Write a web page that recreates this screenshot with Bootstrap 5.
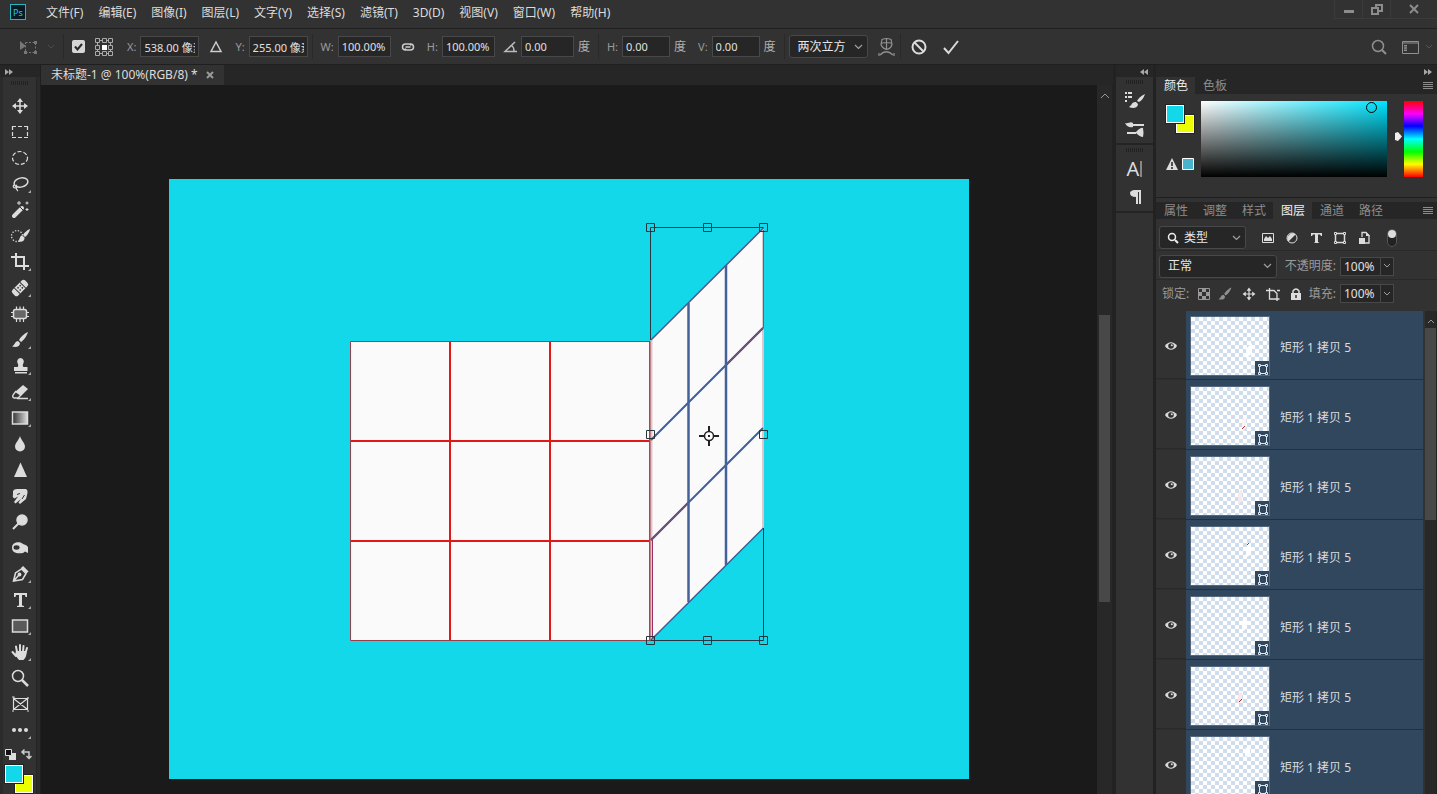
<!DOCTYPE html>
<html lang="zh-CN">
<head>
<meta charset="utf-8">
<meta name="viewport" content="width=device-width, initial-scale=1">
<title>未标题-1</title>
<link href="https://cdn.jsdelivr.net/npm/bootstrap@5.3.0/dist/css/bootstrap.min.css" rel="stylesheet">
<style>
:root{--bar:#323232;--deep:#262626;--line:#1f1f1f;--ink:#dcdcdc;--dim:#9a9a9a}
body{background:var(--bar);color:var(--ink);font:12px/16px "Noto Sans","Noto Sans CJK SC",sans-serif}
button,input,select{font:inherit;color:inherit}
button{background:none;border:0;padding:0}
a{color:inherit;text-decoration:none}
svg{display:block;flex:none}
.i{width:20px;height:20px;fill:none;stroke:currentColor;stroke-width:1.5}
.menubar{height:29px;border-bottom:1px solid var(--line);padding-left:10px}
.menubar nav{gap:15px;margin-left:20px;padding-bottom:3px}
.winbtns{height:19px}
.winbtns button{width:28px;border:1px solid #3b3b3b;border-top:0;border-right:0;color:#8c8c8c;display:grid;place-items:center}
.winbtns button:last-child{width:47px}
.optbar{height:36px;border-bottom:1px solid var(--line);font-size:11px;padding:0 4px 0 19px}
.vsep{width:1px;height:25px;background:#292929}
.lab{color:var(--dim);white-space:nowrap}
.optbar .unit{font-size:12px;color:#b0b0b0}
.field{background:#262626;border:1px solid #484848;height:21px;padding:0 3px;border-radius:0;color:#e0e0e0;min-width:0}
.w59{width:59px}.w53{width:53px}.w48{width:48px}
.pick{appearance:none;background:#262626 url("data:image/svg+xml,%3Csvg xmlns='http://www.w3.org/2000/svg' width='9' height='6'%3E%3Cpath d='M1 1l3.500 3.500L8 1' fill='none' stroke='%23a0a0a0' stroke-width='1.200'/%3E%3C/svg%3E") no-repeat right 4px center;border:1px solid #484848;border-radius:3px;height:23px;padding:0 8px;font-size:12px;color:#e8e8e8}
.pick-interp{width:79px}.pick-kind{width:87px}.pick-blend{width:118px}
.tick{appearance:none;width:13px;height:13px;border-radius:2px;margin:0;background:#d6d6d6 url("data:image/svg+xml,%3Csvg xmlns='http://www.w3.org/2000/svg' width='13' height='13'%3E%3Cpath d='M3 6.500l2.500 3L10 4' fill='none' stroke='%23282828' stroke-width='2'/%3E%3C/svg%3E")}
.strip{height:12px;background:var(--deep);color:#a8a8a8;flex:none}
.toolbox{width:41px;border-right:1px solid var(--line);background:#2b2b2b;flex:none}
.tools{background:var(--bar);border-left:1px solid #2a2a2a;border-right:1px solid #242424;margin:0 3px 0 2px}
.grip{height:16px;display:grid;place-items:center;flex:none}
.grip::before{content:"";width:18px;height:4px;background:repeating-linear-gradient(90deg,#222 0 1px,transparent 1px 2px)}
.tool{position:relative;width:100%;height:26px;display:grid;place-items:center;flex:none}
.more::after{content:"";position:absolute;right:5px;bottom:4px;border:solid transparent;border-width:3px 0 0 3px;border-bottom:3px solid #aaa;border-top:0}
.swap{height:22px;padding:0 4px 0 2px}
.pair{position:relative;width:30px;height:29px}
.tools .pair{margin-left:2px}
.pair i{position:absolute;width:18px;height:18px;border:1px solid #fff;outline:1px solid #222}
.pair .fg{left:0;top:0;background:#13d8ea;z-index:1}
.pair .bg{left:10px;top:10px;background:#ebff00}
.doctabs{height:20px;background:var(--deep);flex:none}
.doctab{background:var(--bar);padding:0 10px;gap:8px}
.stage{background:#1a1a1a}
.stage svg{margin-top:94px}
.vbar{background:#282828;border-right:1px solid #222}
.vbar i{background:#484848}
.docbar{width:16px;padding:0 2px}
.docbar i{height:287px;margin-top:216px}
.layerbar{width:12px;margin-left:2px}
.layerbar i{height:192px}
.dock{width:43px;border-left:3px solid #222;background:var(--bar);border-right:3px solid #222}
.dock section{border-bottom:2px solid #242424}
.dock .grip{height:10px}
.dock .tool{height:28px}
.glyph-a{font:20px/20px "Noto Sans",sans-serif}
.panels{width:281px}
.tabrow{background:var(--deep);height:17px;flex:none}
.tabrow button{padding:0 7px 0 8px;color:#8c8c8c}
.tabrow .on{background:var(--bar);color:#f0f0f0}
.colors{height:104px;padding:7px 14px 0 10px;border-bottom:1px solid var(--line)}
.chips{width:35px}
.field2d{height:76px;background:linear-gradient(transparent,#000),linear-gradient(90deg,#fff,#00e5ff);position:relative}
.ring{position:absolute;right:10px;top:1px;width:11px;height:11px;border:1px solid #000;border-radius:50%}
.hue{width:19px;height:76px;background:linear-gradient(red,#f0f 17%,#00f 33%,#0ff 50%,#0f0 67%,#ff0 83%,red)}
.prow{border-bottom:1px solid #292929;padding-left:3px;height:29px}
.prow.kinds{height:32px;padding-top:6px}
.prow.blend{padding-top:2px}
.prow.locks{height:31px;padding:0 0 4px 6px;border:0}
.prow .i.sm{padding:2px}
.pct{width:40px;height:19px;font-size:12px;border-right:0}
.drop{width:14px;height:19px;border:1px solid #484848;background:#262626;display:grid;place-items:center;color:#a0a0a0;margin-right:43px}
.soft{color:#909090}
.layer{height:70px;border-bottom:1px solid #23303f}
.layer:first-child{height:69px}
.layer .eye{width:30px;background:var(--bar);border-bottom:1px solid #292929;padding-top:2px;display:grid;place-items:center}
.layer .body{background:#31475e;padding:6px 4px 0;gap:10px}
.layer:first-child .body{padding-top:5px}
.thumb{border:1px solid #54687d}
</style>
</head>
<body class="vh-100 overflow-hidden d-flex flex-column">
<svg width="0" height="0" class="position-absolute">
<defs>
<pattern id="chk" width="8" height="8" patternUnits="userSpaceOnUse"><path fill="#fff" d="M0 0h8v8H0z"/><path fill="#cfdded" d="M4 0h4v4H4zM0 4h4v4H0z"/></pattern>
<linearGradient id="gr"><stop stop-color="#333"/><stop offset="1" stop-color="#ddd"/></linearGradient>
<symbol id="move" viewBox="0 0 20 20"><path d="M10 4v12M4 10h12"/><path fill="currentColor" stroke="none" d="M10 2l3 4H7zM10 18l3-4H7zM2 10l4-3v6zM18 10l-4-3v6z"/></symbol>
<symbol id="frame" viewBox="0 0 20 20"><path d="M5.500 5.500h9v9h-9z"/><path fill="#323232" stroke-width="1" d="M4.500 4.500h2v2h-2zM13.500 4.500h2v2h-2zM4.500 13.500h2v2h-2zM13.500 13.500h2v2h-2z"/></symbol>
<symbol id="chev" viewBox="0 0 8 6"><path d="M1 1l3 3 3-3"/></symbol>
<symbol id="eye" viewBox="0 0 14 10"><path fill="currentColor" stroke="none" d="M1 5C4 0 10 0 13 5 10 10 4 10 1 5z"/><circle cx="7" cy="5" r="2.800" fill="#323232" stroke="none"/><circle cx="7.800" cy="4.300" r="1" fill="currentColor" stroke="none"/></symbol>
<symbol id="burger" viewBox="0 0 10 8"><path stroke-width="1" d="M0 .5h10M0 2.500h10M0 4.500h10M0 6.500h10"/></symbol>
<symbol id="brush" viewBox="0 0 20 20"><path fill="currentColor" stroke="none" d="M18 2c-4 1.500-8 6-9 8l2 2c2-1 6-6 7-10zM8 11c-3 0-3 4-6 5.500 4 1 8 .5 8-3.500z"/></symbol>
<symbol id="badge" viewBox="0 0 14 14"><path fill="#31475e" stroke="none" d="M0 0h14v14H0z"/><path stroke-width="1" d="M4.500 4.500h7v8h-7z"/><path fill="#31475e" stroke-width="1" d="M3.500 3.500h2v2h-2zM10.500 3.500h2v2h-2zM3.500 11.500h2v2h-2zM10.500 11.500h2v2h-2z"/></symbol>
</defs>
</svg>

<header class="menubar d-flex align-items-center flex-shrink-0">
  <svg class="mb-1" width="16" height="16" viewBox="0 0 16 16"><rect x=".5" y=".5" width="15" height="15" fill="#071b27" stroke="#27b5c2"/><text x="3" y="12" font-size="9" font-family="Noto Sans" fill="#2fc4dc">Ps</text></svg>
  <nav class="d-flex">
    <a href="#">文件(F)</a><a href="#">编辑(E)</a><a href="#">图像(I)</a><a href="#">图层(L)</a><a href="#">文字(Y)</a><a href="#">选择(S)</a><a href="#">滤镜(T)</a><a href="#">3D(D)</a><a href="#">视图(V)</a><a href="#">窗口(W)</a><a href="#">帮助(H)</a>
  </nav>
  <div class="winbtns d-flex ms-auto align-self-start">
    <button aria-label="最小化"><svg width="10" height="10"><path d="M0 6h10v3H0z" fill="currentColor"/></svg></button>
    <button aria-label="还原"><svg width="12" height="11" fill="none" stroke="currentColor" stroke-width="2"><path d="M5 3V1h6v6H8"/><path d="M1 4h6v6H1z"/></svg></button>
    <button aria-label="关闭"><svg width="10" height="10"><path d="M1 1l8 8M9 1L1 9" stroke="currentColor" stroke-width="2"/></svg></button>
  </div>
</header>

<form class="optbar d-flex align-items-center flex-shrink-0">
  <svg class="i" style="color:#777" viewBox="0 0 20 20"><path stroke-dasharray="2 1.500" stroke-width="1" d="M6.500 5.500h10v10h-10z"/><path fill="currentColor" stroke="none" d="M1 4l6 5-6 4zM15 4h3v3h-3zM15 14h3v3h-3zM5 14h3v3H5z"/></svg>
  <svg class="ms-2" width="8" height="6" fill="none" stroke="#4c4c4c"><use href="#chev"/></svg>
  <span class="vsep mx-2"></span>
  <input type="checkbox" class="tick" checked aria-label="切换参考点">
  <svg class="ms-2" width="22" height="20" viewBox="-1 0 22 20" fill="#323232" stroke="#aaa"><path fill="none" d="M3 3.500h14M3 16.500h14M3.500 3v14M16.500 3v14"/><path d="M1.500 1.500h4v4h-4zM8.500 1.500h4v4h-4zM14.500 1.500h4v4h-4zM1.500 8.500h4v4h-4zM14.500 8.500h4v4h-4zM1.500 14.500h4v4h-4zM8.500 14.500h4v4h-4zM14.500 14.500h4v4h-4z"/><path fill="#fff" stroke="none" d="M8 8h5v5H8z"/></svg>
  <label class="lab ms-2 me-1 ps-1" for="fx">X:</label><input id="fx" class="field w59" value="538.00 像素">
  <svg class="mx-2" width="20" height="20" viewBox="0 0 20 20" fill="none" stroke="#ccc" stroke-width="1.500"><path d="M9 5l5 9.500H4z"/></svg>
  <label class="lab me-1" for="fy">Y:</label><input id="fy" class="field w59" value="255.00 像素">
  <span class="vsep mx-1"></span>
  <label class="lab mx-1" for="fw">W:</label><input id="fw" class="field w53" value="100.00%">
  <svg class="mx-2" width="20" height="20" viewBox="0 0 20 20" fill="none" stroke="#ccc" stroke-width="1.500"><path d="M7 13H6.500a3 3 0 010-6H10a2.500 2.500 0 012 1.500M11 7h.5a3 3 0 010 6H8a2.500 2.500 0 01-2-1.500M6.500 10h5"/></svg>
  <label class="lab me-1" for="fh">H:</label><input id="fh" class="field w53" value="100.00%">
  <svg class="ms-2" width="18" height="20" viewBox="0 0 18 20" fill="none" stroke="#bbb" stroke-width="1.500"><path d="M12 5L2 14.500h12M8 8q3 2 3 6"/></svg>
  <input class="field w53" value="0.00" aria-label="旋转"><span class="unit ms-1">度</span>
  <span class="vsep mx-2"></span>
  <label class="lab me-1" for="sh">H:</label><input id="sh" class="field w48" value="0.00"><span class="unit ms-1">度</span>
  <label class="lab ms-2 ps-1 me-1" for="sv">V:</label><input id="sv" class="field w48" value="0.00"><span class="unit ms-1">度</span>
  <span class="vsep ms-2 me-1"></span>
  <select class="pick pick-interp" aria-label="插值"><option>两次立方</option></select>
  <button type="button" aria-label="变形" class="ms-2 soft"><svg class="i" viewBox="0 0 20 20"><g stroke-width="1.200"><path d="M6 2.500q4.500-2 9 0l1 5q-1 4-5.500 5Q6 11 5 7.500zM10.500 1.500v11M5 6.500q5.500-2 11 0"/><path d="M4 18q6-6.500 13 0" stroke-width="1.500"/><path d="M3 16v3M18 16v3"/></g></svg></button>
  <span class="vsep ms-1 me-2"></span>
  <button type="button" aria-label="取消"><svg class="i" viewBox="0 0 20 20"><circle cx="10" cy="10" r="6.500" stroke-width="2"/><path stroke-width="2" d="M5.500 5.500l9 9"/></svg></button>
  <button type="button" aria-label="提交" class="ms-2 ps-1"><svg class="i" viewBox="0 0 20 20"><path stroke-width="2" d="M3 11l4.500 5L17 4"/></svg></button>
  <button type="button" aria-label="搜索" class="ms-auto soft"><svg class="i" viewBox="0 0 20 20"><circle cx="9" cy="9" r="5.500"/><path stroke-width="2" d="M13 13l4 4"/></svg></button>
  <button type="button" aria-label="工作区" class="ms-2 ps-1 soft"><svg class="i" viewBox="0 0 20 20"><path stroke-width="1" d="M1.500 4.500h16v12h-16zM1.500 6h16"/><path d="M4.500 8v6" stroke-width="3" stroke-dasharray="1.500 .7"/></svg></button>
  <svg class="ms-1" width="8" height="6" fill="none" stroke="#555"><use href="#chev"/></svg>
</form>

<div class="d-flex flex-grow-1 overflow-hidden">
  <aside class="toolbox d-flex flex-column">
    <div class="strip ps-1 pt-1"><svg width="10" height="6" fill="currentColor"><path d="M1 0l4 3-4 3zM5 0l4 3-4 3z"/></svg></div>
    <div class="tools flex-grow-1">
      <div class="grip pb-1"></div>
      <button class="tool" aria-label="移动"><svg class="i"><use href="#move"/></svg></button>
      <button class="tool" aria-label="矩形选框"><svg class="i" viewBox="0 0 20 20"><path stroke-width="1.200" d="M2.500 4v12M17.500 4v12M2 4.500h16M2 15.500h16" stroke-dasharray="4 2"/></svg></button>
      <button class="tool" aria-label="椭圆选框"><svg class="i" viewBox="0 0 20 20"><ellipse cx="10" cy="10" rx="7.500" ry="6.500" stroke-dasharray="4 2" stroke-width="1.200"/></svg></button>
      <button class="tool more" aria-label="套索"><svg class="i" viewBox="0 0 20 20"><ellipse cx="11" cy="8.500" rx="7" ry="4.500" transform="rotate(-14 11 8.500)"/><path d="M4 11q-2 2 1 3 3 0 1.500-2.500Q5 14 8 17" stroke-width="1.200"/></svg></button>
      <button class="tool" aria-label="魔棒"><svg class="i" viewBox="0 0 20 20"><path d="M4 16l8-8" stroke-width="4" stroke-linecap="round"/><path d="M10 7l3 3" stroke="#323232" stroke-width="1"/><path stroke-width="1" d="M9 1v4M7 3h4M17 1.500v3M15.500 3h3M17 8v3M15.500 9.500h3"/></svg></button>
      <button class="tool" aria-label="快速选择"><svg class="i" viewBox="0 0 20 20"><circle cx="7" cy="10" r="5.500" stroke-width="1.300" stroke-dasharray="1.300 1.600"/><path fill="currentColor" stroke="none" d="M20 3c-3 1-6 4-7 6l2 2c2-1 4.500-5 5-8zM12 9.500c-2.500.5-2 4-4 6 3.500 1 7-.5 6.500-4z"/></svg></button>
      <button class="tool more" aria-label="裁剪"><svg class="i" viewBox="0 0 20 20"><path stroke-width="2" d="M6 1v13h13M1 5h13v13"/></svg></button>
      <button class="tool more" aria-label="修复画笔"><svg class="i" viewBox="0 0 20 20"><g transform="rotate(-45 10 10)"><rect x="1" y="6" width="18" height="8" rx="2.500" fill="currentColor" stroke="none"/><path stroke="#323232" stroke-width="1" d="M6 6v8M14 6v8"/><path stroke="#323232" stroke-dasharray="1.500 1.500" d="M8 8.500h5M8 11.500h5"/></g></svg></button>
      <button class="tool" aria-label="修补"><svg class="i" viewBox="0 0 20 20"><rect x="3.500" y="5.500" width="13" height="9" rx="2" fill="#666"/><path stroke-width="1.200" d="M6.500 2.500v3M10 2.500v3M13.500 2.500v3M6.500 15v3M10 15v3M13.500 15v3M1 8.500h3M1 12.500h3M16 8.500h3M16 12.500h3"/></svg></button>
      <button class="tool more" aria-label="画笔"><svg class="i"><use href="#brush"/></svg></button>
      <button class="tool more" aria-label="图章"><svg class="i" viewBox="0 0 20 20"><path fill="currentColor" stroke="none" d="M10.500 2a3.500 3.500 0 013 5c-1 2-1 3 0 4h4v4H4v-4h3.500c1-1 1-2 0-4a3.500 3.500 0 013-5zM5 16h12v1.500H5z"/></svg></button>
      <button class="tool more" aria-label="橡皮擦"><svg class="i" viewBox="0 0 20 20"><path fill="currentColor" stroke="none" d="M13 3l5 4-7 7-6-4z"/><path d="M6 9l-3 4q-1 2 1 3h4l3-3M7 16.500h11" stroke-width="1.300"/></svg></button>
      <button class="tool more" aria-label="渐变"><svg class="i" viewBox="0 0 20 20"><path fill="url(#gr)" d="M2.500 4h15v12h-15z"/></svg></button>
      <button class="tool" aria-label="模糊"><svg class="i" viewBox="0 0 20 20"><path fill="currentColor" stroke="none" d="M10 2c1 4 5 7 5 10.500a5 5 0 01-10 0C5 9 9 6 10 2z"/></svg></button>
      <button class="tool" aria-label="锐化"><svg class="i" viewBox="0 0 20 20"><path fill="currentColor" stroke="none" d="M10.500 2.500L17 17H4z"/></svg></button>
      <button class="tool" aria-label="涂抹"><svg class="i" viewBox="0 0 20 20"><path fill="currentColor" stroke="none" d="M7 3h9q2 1 1.500 4l-1.500 6-6 5-1.500-1.500L11 13l-5.500 4.500L4 16l4-5.500-3.500 2Q2 11 3 9V5q1-2 4-2z"/><path d="M7 8.500l3-1M12 13l2.500-4" stroke="#323232" stroke-width="1"/></svg></button>
      <button class="tool" aria-label="减淡"><svg class="i" viewBox="0 0 20 20"><circle cx="12" cy="8" r="5" fill="currentColor"/><path d="M8.500 11.500L3 17" stroke-width="2"/></svg></button>
      <button class="tool" aria-label="海绵"><svg class="i" viewBox="0 0 20 20"><path fill="currentColor" stroke="none" d="M2 9.500C2 4 10 3 13 6q4 1 5 3v6l-3-1.500-2 1.500C7 16 2 15 2 9.500z"/><ellipse cx="6.500" cy="9.500" rx="3" ry="2.200" fill="#323232" stroke="none"/></svg></button>
      <button class="tool more" aria-label="钢笔"><svg class="i" viewBox="0 0 20 20"><path d="M3.500 17l2-8 6-4 4.500 4.500-3.500 6zM3.500 17l5.500-6"/><circle cx="9.500" cy="10.500" r="1.200" fill="currentColor"/><path d="M12 3l5.500 5.500" stroke-width="3"/></svg></button>
      <button class="tool more" aria-label="文字"><svg class="i" viewBox="0 0 20 20"><path fill="currentColor" stroke="none" d="M4 3h13v4h-1.500l-.5-2h-3v10.500l2 .5v1H7v-1l2-.5V5H6l-.5 2H4z"/></svg></button>
      <button class="tool more" aria-label="矩形"><svg class="i" viewBox="0 0 20 20"><path fill="#5a5a5a" d="M2.500 4h15v12h-15z"/></svg></button>
      <button class="tool more" aria-label="抓手"><svg class="i" viewBox="0 0 20 20"><path d="M7 10L6 4.500M10 10V3M13 10l.5-6M15.500 11l1.500-5M6 14l-3.500-4" stroke-width="2" stroke-linecap="round"/><path fill="currentColor" stroke="none" d="M6 9h10.500q.5 6-3 9H9l-4-5z"/></svg></button>
      <button class="tool" aria-label="缩放"><svg class="i" viewBox="0 0 20 20"><circle cx="8" cy="8" r="5.500"/><path stroke-width="2.500" d="M12 12l6 6"/></svg></button>
      <button class="tool" aria-label="图框"><svg class="i" viewBox="0 0 20 20"><path stroke-width="1.200" d="M3.500 4.500h14v11h-14zM3.500 4.500l14 11M17.500 4.500l-14 11M2 3h2v2M18 3v2M2 17h2M17 17h2"/></svg></button>
      <button class="tool more" aria-label="更多"><svg class="i" viewBox="0 0 20 20"><path stroke-width="4" stroke-linecap="round" d="M4 10h.01M10 10h.01M16 10h.01"/></svg></button>
      <div class="swap d-flex justify-content-between align-items-center">
        <svg width="11" height="11"><path fill="#ddd" d="M4 4h7v7H4z"/><path stroke="#ddd" fill="#111" d="M.5 .5h6v6h-6z"/></svg>
        <svg width="12" height="12" fill="none" stroke="#ccc" stroke-width="1.500"><path d="M2 4h7v6M4.500 1.500L2 4l2.500 2.500M6.500 8L9 10.500 11.500 8"/></svg>
      </div>
      <div class="pair"><i class="fg"></i><i class="bg"></i></div>
    </div>
  </aside>

  <main class="d-flex flex-column flex-grow-1 overflow-hidden">
    <div class="doctabs d-flex">
      <div class="doctab d-flex align-items-center"><span>未标题-1 @ 100%(RGB/8) *</span><button aria-label="关闭文档" class="lab"><svg width="8" height="8"><path d="M1 1l6 6M7 1L1 7" stroke="currentColor" stroke-width="2"/></svg></button></div>
    </div>
    <div class="d-flex flex-grow-1 overflow-hidden">
      <div class="stage flex-grow-1 d-flex justify-content-center align-items-start overflow-hidden">
        <svg width="800" height="600" viewBox="169 179 800 600">
          <path fill="#13d8ea" d="M169 179h800v600H169z"/>
          <path fill="#fafafa" stroke="#9a4048" d="M350.500 341.500h300v299h-300z"/>
          <path stroke="#e01818" stroke-width="2" d="M450 342v298M550 342v298M351 441h299M351 541h299"/>
          <path fill="#fafafa" d="M651 340l112.500-112V528L651 640z"/>
          <g fill="none">
            <path stroke="#e2c4cc" stroke-width="2" d="M651.500 340v300M763 230v298"/>
            <path stroke="#b0405c" d="M649.500 342v298"/>
            <path stroke="#8a5070" d="M763.500 230v98"/>
            <path stroke="#a03060" d="M652.500 540v98"/>
            <path stroke="#4a5a90" stroke-width="1.500" d="M651 340l112.500-112M651 640l112.500-112"/>
            <path stroke="#3f5f9c" stroke-width="2" d="M651 440l112-112M651 540l112-112"/>
            <path stroke="#6f5078" stroke-width="2" d="M651 540l37-37M726 365l37-37"/>
            <path stroke="#456199" stroke-width="2.500" d="M688.500 303v299M726 265v300"/>
            <path stroke="#2b3440" d="M650.500 340V227.500h113M763.500 528v112.500h-113"/>
            <path stroke="#26343c" d="M646.500 223.500h8v8h-8zM703.500 223.500h8v8h-8zM759.500 223.500h8v8h-8zM646.500 430.500h8v8h-8zM759.500 430.500h8v8h-8zM646.500 636.500h8v8h-8zM703.500 636.500h8v8h-8zM759.500 636.500h8v8h-8z"/>
            <g stroke="#222" stroke-width="2"><circle cx="709" cy="436" r="4.500" fill="#fff" stroke-width="1.500"/><path d="M709 426v5M709 441v5M699 436h5M714 436h5"/></g>
            <path fill="#222" d="M708 435h2v2h-2z"/>
          </g>
        </svg>
      </div>
      <div class="vbar docbar d-flex flex-column flex-shrink-0">
        <svg class="mx-auto mt-2" width="10" height="6" fill="none" stroke="#999"><path d="M1 5l4-4 4 4"/></svg>
        <i></i>
      </div>
    </div>
  </main>

  <aside class="dock flex-shrink-0">
    <div class="strip d-flex justify-content-end pe-1 pt-1"><svg width="10" height="6" fill="currentColor"><path d="M5 0L1 3l4 3zM9 0L5 3l4 3z"/></svg></div>
    <section>
      <div class="grip"></div>
      <button class="tool" aria-label="画笔设置"><svg width="22" height="20" fill="currentColor" viewBox="0 0 22 20"><path d="M1 1h2v2H1zM4 1h4v2H4zM1 5h2v2H1zM4 5h4v2H4zM1 9h2v2H1zM21 3c-4 1.500-7 5-8 7l2 1c2-1 5-4 6-8zM12 11c-4-.5-4 3-7 5 4 2 9 1 9-3z"/></svg></button>
      <button class="tool" aria-label="画笔"><svg width="22" height="20" fill="currentColor" viewBox="0 0 22 20"><path d="M9 5h11v2H9zM1 4c4 1 5-2 8 0v4c-3 1-6 0-8-4zM3 13h9v2H3zM12 13q5-5 7-4 1 5 0 9-3 0-7-4z"/></svg></button>
    </section>
    <section>
      <div class="grip"></div>
      <button class="tool" aria-label="字符"><span class="glyph-a d-flex align-items-center">A<svg width="3" height="16"><path d="M2 0v16" stroke="#ddd"/></svg></span></button>
      <button class="tool" aria-label="段落"><svg width="16" height="16" fill="currentColor"><path d="M7 1h7v14h-2V3h-1v12H9V8q-6 0-6-4 0-2 4-3z"/></svg></button>
    </section>
  </aside>

  <aside class="panels flex-shrink-0 d-flex flex-column">
    <div class="strip d-flex justify-content-end pe-1 pt-1"><svg width="10" height="6" fill="currentColor"><path d="M1 0l4 3-4 3zM5 0l4 3-4 3z"/></svg></div>
    <div class="tabrow d-flex"><button class="on">颜色</button><button>色板</button><button class="ms-auto px-1" aria-label="面板菜单"><svg width="10" height="8" stroke="currentColor"><use href="#burger"/></svg></button></div>
    <div class="colors d-flex flex-shrink-0">
      <div class="chips">
        <div class="pair mt-1"><i class="fg"></i><i class="bg"></i></div>
        <div class="d-flex align-items-center gap-1 pt-4"><svg width="12" height="12"><path fill="#ddd" d="M6 0l6 12H0z"/><path stroke="#222" stroke-width="1.500" d="M6 4v4M6 9v2"/></svg><svg width="12" height="12"><path fill="#48b4cc" stroke="#fff" d="M.5 .5h11v11H.5z"/></svg></div>
      </div>
      <div class="field2d flex-grow-1"><span class="ring"></span></div>
      <svg class="ms-2" width="9" height="76" fill="#eee"><path d="M0 32l3-1 4 4.500-4 4.500-3-1z"/></svg>
      <div class="hue"></div>
    </div>
    <div class="tabrow d-flex mt-1"><button>属性</button><button>调整</button><button>样式</button><button class="on">图层</button><button>通道</button><button>路径</button><button class="ms-auto px-1" aria-label="面板菜单"><svg width="10" height="8" stroke="currentColor"><use href="#burger"/></svg></button></div>
    <div class="prow kinds d-flex align-items-center flex-shrink-0">
      <div class="position-relative"><svg class="position-absolute top-50 translate-middle-y ms-2" width="12" height="12" fill="none" stroke="#eee" stroke-width="1.500"><circle cx="5" cy="5" r="3.500"/><path stroke-width="2" d="M8 8l3 3"/></svg>
      <select class="pick pick-kind ps-4" aria-label="筛选"><option>类型</option></select></div>
      <div class="d-flex ms-2 ps-1 gap-1">
        <svg class="i" viewBox="0 0 20 20"><path stroke-width="1" d="M4.500 5.500h11v9h-11z"/><path fill="currentColor" stroke="none" d="M6 13v-2l2-3 2 2 2-2 2 3v2z"/></svg>
        <svg class="i" viewBox="0 0 20 20"><circle cx="10" cy="10" r="5" stroke-width="1"/><path fill="currentColor" stroke="none" d="M13.500 6.500l-7 7a5 5 0 017-7z"/></svg>
        <svg class="i" viewBox="0 0 20 20"><path fill="currentColor" stroke="none" d="M5 5h11v3h-1l-1-1.500h-2V14l1.500 1H8l1-1V6.500H7L6 8H5z"/></svg>
        <svg class="i" viewBox="0 0 20 20"><use href="#frame"/></svg>
        <svg class="i" viewBox="0 0 20 20"><path d="M8 9V4.500h4l3 3V15h-4" stroke-width="1.300"/><path fill="currentColor" stroke="none" d="M5 10h6v6H5zM12 4v4h4z"/></svg>
        <svg class="ms-2" width="12" height="20"><rect x="1.500" y="1.500" width="9" height="17" rx="4.500" fill="#222" stroke="#555"/><circle cx="6" cy="6" r="4" fill="#ddd"/></svg>
      </div>
    </div>
    <div class="prow blend d-flex align-items-center flex-shrink-0">
      <select class="pick pick-blend" aria-label="混合模式"><option>正常</option></select>
      <label class="lab ms-auto me-1" for="op">不透明度:</label><input id="op" class="field pct" value="100%"><button class="drop" aria-label="不透明度滑块"><svg width="8" height="6" fill="none" stroke="currentColor"><use href="#chev"/></svg></button>
    </div>
    <div class="prow locks d-flex align-items-center flex-shrink-0">
      <span class="lab">锁定:</span>
      <div class="d-flex ms-2 gap-1">
        <svg width="14" height="20" viewBox="0 0 14 20"><path fill="none" stroke="#999" d="M1.500 4.500h11v11h-11z"/><path fill="#999" d="M5 4h4v4H5zM1 8h4v4H1zM9 8h4v4H9zM5 12h4v4H5z"/></svg>
        <svg class="i sm soft"><use href="#brush"/></svg>
        <svg class="i sm"><use href="#move"/></svg>
        <svg class="i" viewBox="0 0 20 20"><path stroke-width="1.300" d="M6.500 4v11h10M3 6.500h8l3 3V17M14 6.500h3"/></svg>
        <svg class="i" viewBox="0 0 20 20"><path fill="currentColor" stroke="none" d="M4 9h10v7H4z"/><path d="M6 9V7q3-4 6 0v2"/><path stroke="#323232" d="M9 11v3"/></svg>
      </div>
      <label class="lab ms-auto me-1" for="fi">填充:</label><input id="fi" class="field pct" value="100%"><button class="drop" aria-label="填充滑块"><svg width="8" height="6" fill="none" stroke="currentColor"><use href="#chev"/></svg></button>
    </div>
    <div class="d-flex flex-grow-1 overflow-hidden">
      <div class="flex-grow-1" id="layers"></div>
      <div class="vbar layerbar d-flex flex-column"><svg class="mx-auto mt-2" width="8" height="9" fill="none" stroke="#999"><path d="M1 4l3-3 3 3"/></svg><i></i></div>
    </div>
  </aside>
</div>

<script>
// Each layer thumbnail shows one skewed tile; marks are drawn in thumbnail pixels.
const marks = [
  '<path fill="#fff" d="M55 32l6-6v10l-6 6z"/>',
  '<path fill="#fff2f2" d="M51 34l4-4v11l-4 4z"/><path stroke="#a33" d="M51 42l3-3"/>',
  '<path fill="#fbe9e9" d="M47 36l4-4v12l-4 4z"/>',
  '<path fill="#fff" d="M55 20l5-4v11l-5 4z"/><path stroke="#844" d="M56 18l2-2"/>',
  '<path fill="#fff" d="M51 24l5-4v11l-5 4z"/>',
  '<path fill="#ffe6e6" d="M47 28l4-4v9l-4 4z"/><path stroke="#a22" d="M48 35l3-3"/>',
  '<path fill="#fff" d="M54 12l5-4v9l-5 3z"/>'
];
document.getElementById('layers').innerHTML = marks.map(m => `
  <div class="layer d-flex">
    <button class="eye flex-shrink-0" aria-label="可见性"><svg width="14" height="10" fill="none"><use href="#eye"/></svg></button>
    <div class="body d-flex flex-grow-1">
      <svg class="thumb" width="80" height="60"><path fill="url(#chk)" d="M0 0h80v60H0z"/>${m}<g transform="translate(64 44)" fill="none" stroke="#dfe8f0"><use href="#badge" width="14" height="14"/></g></svg>
      <span class="pt-4">矩形 1 拷贝 5</span>
    </div>
  </div>`).join('');
</script>
<script src="https://cdn.jsdelivr.net/npm/bootstrap@5.3.0/dist/js/bootstrap.bundle.min.js"></script>
</body>
</html>
